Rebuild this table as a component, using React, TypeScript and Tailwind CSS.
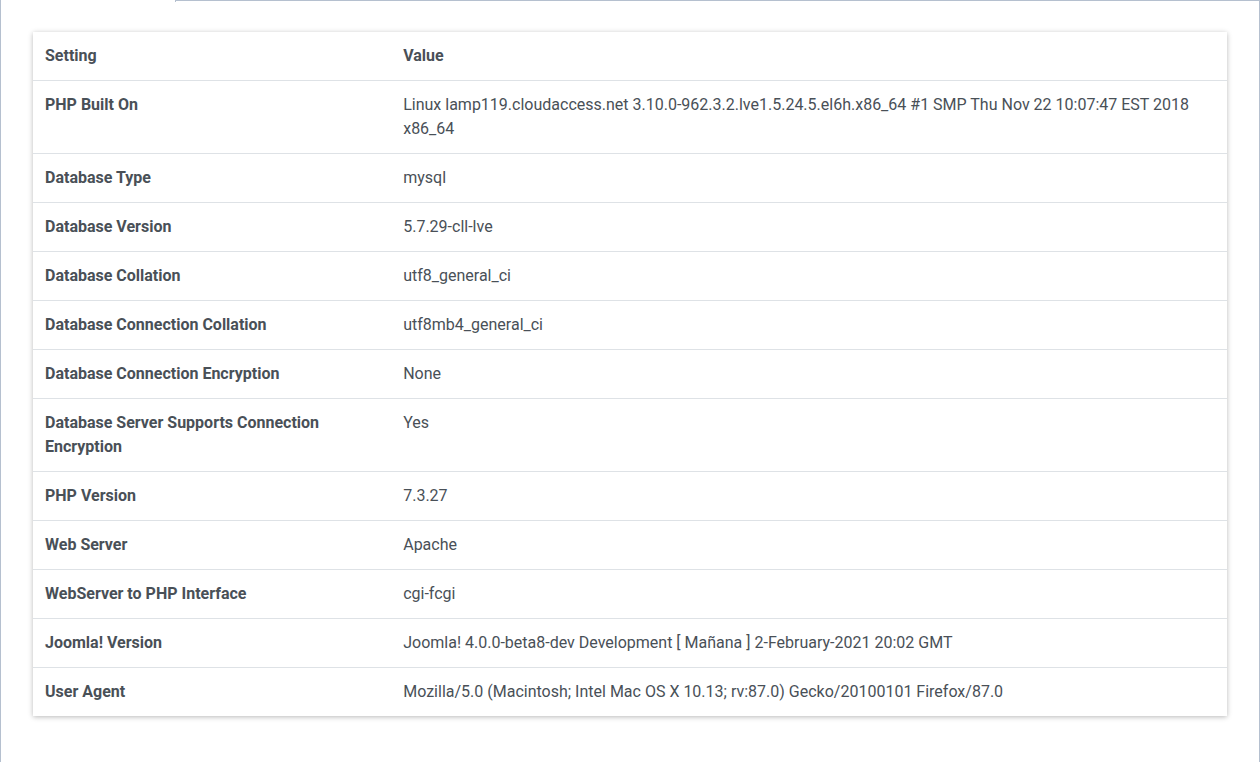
import React from "react";

type Row = {
  setting: string;
  value: string;
};

const rows: Row[] = [
  {
    setting: "PHP Built On",
    value:
      "Linux lamp119.cloudaccess.net 3.10.0-962.3.2.lve1.5.24.5.el6h.x86_64 #1 SMP Thu Nov 22 10:07:47 EST 2018 x86_64",
  },
  { setting: "Database Type", value: "mysql" },
  { setting: "Database Version", value: "5.7.29-cll-lve" },
  { setting: "Database Collation", value: "utf8_general_ci" },
  { setting: "Database Connection Collation", value: "utf8mb4_general_ci" },
  { setting: "Database Connection Encryption", value: "None" },
  { setting: "Database Server Supports Connection Encryption", value: "Yes" },
  { setting: "PHP Version", value: "7.3.27" },
  { setting: "Web Server", value: "Apache" },
  { setting: "WebServer to PHP Interface", value: "cgi-fcgi" },
  {
    setting: "Joomla! Version",
    value: "Joomla! 4.0.0-beta8-dev Development [ Mañana ] 2-February-2021 20:02 GMT",
  },
  {
    setting: "User Agent",
    value:
      "Mozilla/5.0 (Macintosh; Intel Mac OS X 10.13; rv:87.0) Gecko/20100101 Firefox/87.0",
  },
];

const App: React.FC = () => {
  return (
    <div
      className="h-[762px] w-[1260px] overflow-hidden bg-white text-[#495057]"
      style={{ fontFamily: "Roboto, 'Liberation Sans', sans-serif" }}
    >
      <div className="flex h-full flex-col border-l border-r border-[#b5c0cf]">
        <div className="flex h-[2px]">
          <div className="w-[174px]" />
          <div className="flex-1 border-t border-l border-[#b5c0cf]" />
        </div>
        <div className="px-8 pt-[30px]">
          <table className="w-full table-fixed border-collapse bg-white text-[16px] leading-6 shadow-[0_1px_5px_rgba(0,0,0,0.28)]">
            <colgroup>
              <col className="w-[30%]" />
              <col />
            </colgroup>
            <thead>
              <tr className="border-b border-[#dee2e6]">
                <th className="px-3 py-3 text-left align-top font-bold">Setting</th>
                <th className="px-3 py-3 text-left align-top font-bold">Value</th>
              </tr>
            </thead>
            <tbody>
              {rows.map((r, i) => (
                <tr
                  key={r.setting}
                  className={i < rows.length - 1 ? "border-b border-[#dee2e6]" : ""}
                >
                  <td className="px-3 py-3 align-top font-bold">{r.setting}</td>
                  <td className="px-3 py-3 align-top">{r.value}</td>
                </tr>
              ))}
            </tbody>
          </table>
        </div>
      </div>
    </div>
  );
};

export default App;
